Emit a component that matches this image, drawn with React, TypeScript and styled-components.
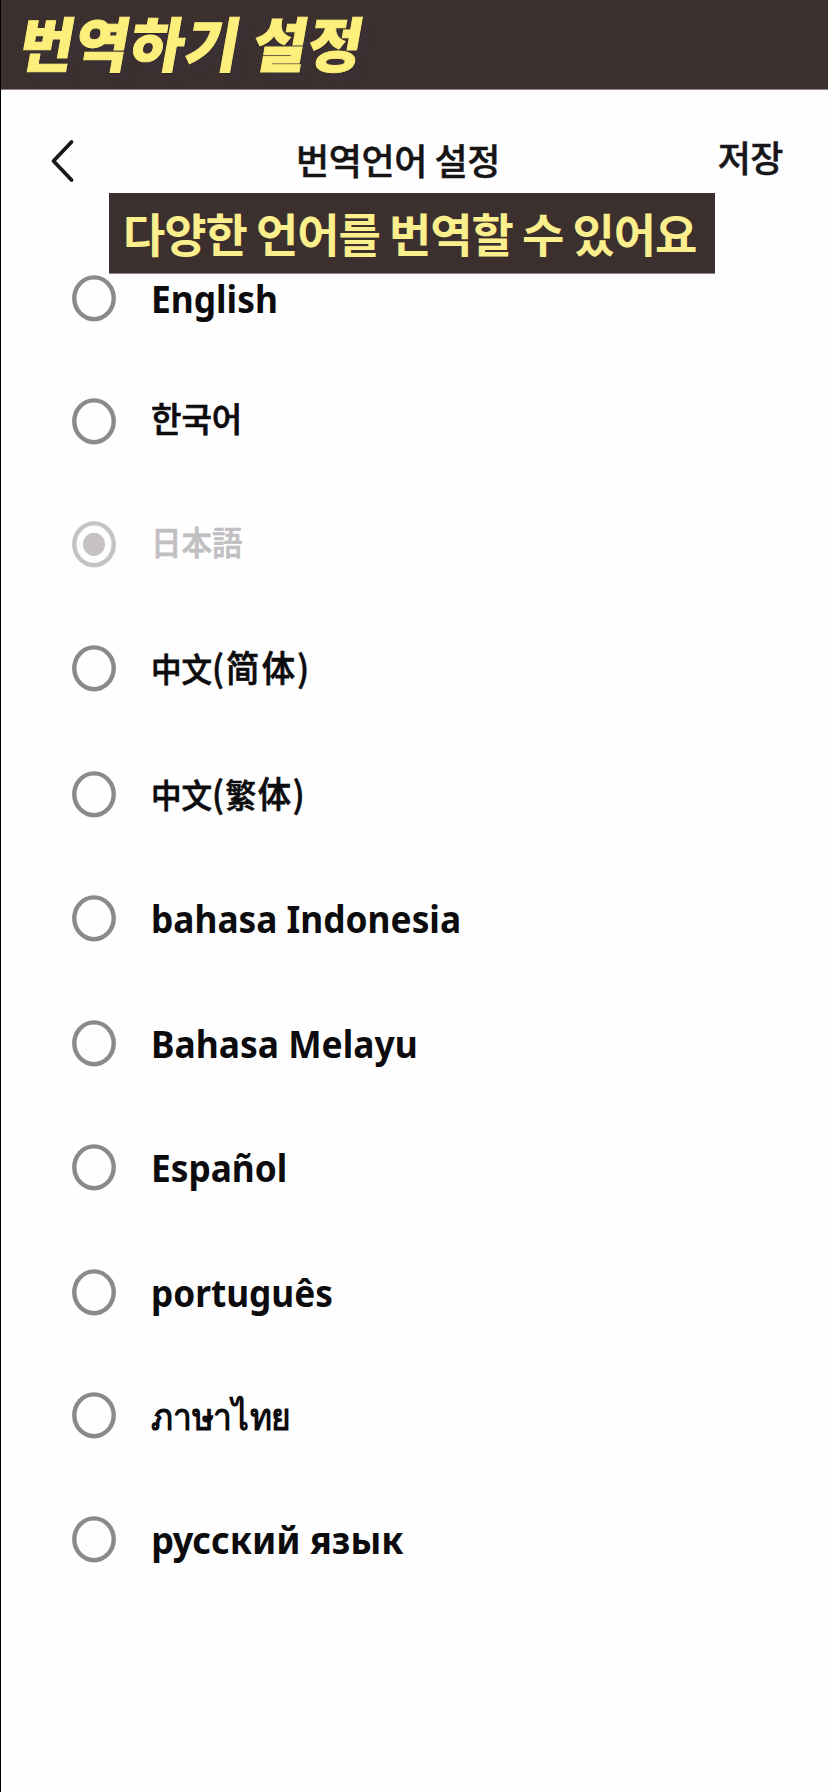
import React, { useState } from 'react';
import styled, { createGlobalStyle } from 'styled-components';

const KR = '"Noto Sans CJK KR", sans-serif';
const LATIN = '"Noto Sans", "Noto Sans CJK KR", sans-serif';
const JP = '"Noto Sans CJK JP", sans-serif';
const SC = '"Noto Sans CJK SC", sans-serif';

const GlobalStyle = createGlobalStyle`
  * { box-sizing: border-box; }
  body { margin: 0; background: #fefefe; }
`;

const Screen = styled.div`
  display: flex;
  flex-direction: column;
  width: 828px;
  height: 1792px;
  overflow: hidden;
  border-left: 1px solid #000;
  background: #fefefe;
  font-family: ${LATIN};
`;

const Banner = styled.header`
  flex: none;
  height: 90px;
  padding-left: 20px;
  background: #3c302f;
  border-bottom: 1px solid #8f8585;
`;

const BannerTitle = styled.h1`
  display: inline-block;
  margin: 0;
  font: 900 59px/89px ${KR};
  letter-spacing: 0.9px;
  word-spacing: -2px;
  white-space: nowrap;
  color: #fdef7b;
  -webkit-text-stroke: 1px #fdef7b;
  text-shadow: 1px 1px 0 #241d2b, -1px 0 0 #2c2427, 9px 9px 2px #3b3034;
  transform: translateY(-3px) skewX(-10deg);
`;

const NavBar = styled.nav`
  flex: none;
  display: flex;
  align-items: center;
  height: 103px;
  padding: 0 45px 0 49px;
`;

const BackButton = styled.button`
  display: flex;
  width: 26px;
  height: 44px;
  margin-top: 39px;
  padding: 0;
  border: 0;
  background: none;
`;

const NavTitle = styled.h2`
  margin: 34px 0 0 220px;
  font: 500 36px/50px ${KR};
  letter-spacing: -0.4px;
  white-space: nowrap;
  color: #171415;
  -webkit-text-stroke: 0.5px #171415;
`;

const SaveButton = styled.button`
  margin: 28px 0 0 auto;
  padding: 0;
  border: 0;
  background: none;
  font: 500 36px/50px ${KR};
  letter-spacing: -0.5px;
  color: #17171b;
  -webkit-text-stroke: 0.5px #17171b;
`;

const Caption = styled.p`
  flex: none;
  align-self: flex-start;
  width: 606px;
  height: 81px;
  margin: 0 0 0 108px;
  padding-left: 14px;
  border-bottom: 1px solid #8f8585;
  background: #3c302f;
  font: 700 46px/78px ${KR};
  letter-spacing: -1.1px;
  white-space: nowrap;
  color: #fbee8d;
`;

const Options = styled.ul`
  display: flex;
  flex-direction: column;
  margin: 1px 0 0;
  padding: 0 0 0 71px;
  list-style: none;
`;

const Option = styled.li<{ $pitch: number }>`
  flex: none;
  height: ${(p) => p.$pitch}px;
`;

const Choice = styled.label`
  display: flex;
  align-items: center;
  gap: 35px;
  height: 47px;
`;

const RadioIcon = styled.svg<{ $disabled?: boolean }>`
  flex: none;
  width: 44px;
  height: 47px;
  color: ${(p) => (p.$disabled ? '#c6c2c4' : '#8b898c')};
`;

const Label = styled.span<{ $font?: string; $size?: number; $weight?: number; $stretch: number; $lift?: number; $disabled?: boolean }>`
  font-family: ${(p) => p.$font ?? LATIN};
  font-size: ${(p) => p.$size ?? 37}px;
  font-weight: ${(p) => p.$weight ?? 700};
  line-height: 47px;
  white-space: nowrap;
  color: ${(p) => (p.$disabled ? '#c2bfc2' : '#0c0b0d')};
  -webkit-text-stroke: ${(p) => (p.$weight === 500 ? 0.7 : 0)}px currentColor;
  transform: translateY(${(p) => -(p.$lift ?? 0)}px) scaleX(${(p) => p.$stretch});
  transform-origin: left center;
`;

const Wide = styled.span<{ $spacing: number }>`
  font-size: 36px;
  letter-spacing: ${(p) => p.$spacing}px;
`;

const Spaced = styled.span`
  letter-spacing: 1.8px;
`;

interface Language {
  id: string;
  pitch: number;
  stretch: number;
  name: React.ReactNode;
  font?: string;
  size?: number;
  weight?: number;
  lift?: number;
  disabled?: boolean;
}

const languages: Language[] = [
  { id: 'en', pitch: 123, stretch: 0.955, name: 'English' },
  { id: 'ko', pitch: 122.5, stretch: 0.973, name: '한국어', font: KR, size: 34, weight: 500, lift: 4 },
  { id: 'ja', pitch: 124.5, stretch: 0.925, name: '日本語', font: JP, size: 33, weight: 500, lift: 3.5, disabled: true },
  { id: 'zh-Hans', pitch: 125.5, stretch: 0.925, name: <>中文<Wide $spacing={2.4}>(简体)</Wide></>, font: SC, size: 33, weight: 500, lift: 1 },
  { id: 'zh-Hant', pitch: 124.5, stretch: 0.925, name: <>中文<Wide $spacing={1.8}>(</Wide><Spaced>繁</Spaced><Wide $spacing={1.8}>体)</Wide></>, font: SC, size: 33, weight: 500, lift: 1 },
  { id: 'id', pitch: 124.5, stretch: 0.954, name: 'bahasa Indonesia' },
  { id: 'ms', pitch: 124.5, stretch: 0.957, name: 'Bahasa Melayu' },
  { id: 'es', pitch: 124.5, stretch: 0.953, name: 'Español' },
  { id: 'pt', pitch: 123.5, stretch: 0.951, name: 'português' },
  { id: 'th', pitch: 123.5, stretch: 0.905, name: 'ภาษาไทย' },
  { id: 'ru', pitch: 47, stretch: 0.975, name: 'русский язык' },
];

function Radio({ checked, disabled }: { checked: boolean; disabled?: boolean }) {
  return (
    <RadioIcon viewBox="0 0 44 47" $disabled={disabled}>
      <ellipse cx="22" cy="23.3" rx="19.7" ry="20.9" fill="none" stroke="currentColor" strokeWidth="4.4" />
      {checked && <ellipse cx="22" cy="23.3" rx="11" ry="11.6" fill="currentColor" />}
    </RadioIcon>
  );
}

export default function App() {
  const [current] = useState('ja');
  return (
    <>
      <GlobalStyle />
      <Screen>
        <Banner>
          <BannerTitle>번역하기 설정</BannerTitle>
        </Banner>
        <NavBar>
          <BackButton aria-label="뒤로">
            <svg width="26" height="44" viewBox="0 0 26 44" fill="none" stroke="#1b1718" strokeWidth="3.8" strokeLinecap="round" strokeLinejoin="round">
              <path d="M21.5 3 L3.5 22 L21.5 41" />
            </svg>
          </BackButton>
          <NavTitle>번역언어 설정</NavTitle>
          <SaveButton>저장</SaveButton>
        </NavBar>
        <Caption>다양한 언어를 번역할 수 있어요</Caption>
        <Options>
          {languages.map((l) => (
            <Option key={l.id} $pitch={l.pitch}>
              <Choice>
                <Radio checked={l.id === current} disabled={l.disabled} />
                <Label $font={l.font} $size={l.size} $weight={l.weight} $stretch={l.stretch} $lift={l.lift} $disabled={l.disabled}>
                  {l.name}
                </Label>
              </Choice>
            </Option>
          ))}
        </Options>
      </Screen>
    </>
  );
}
